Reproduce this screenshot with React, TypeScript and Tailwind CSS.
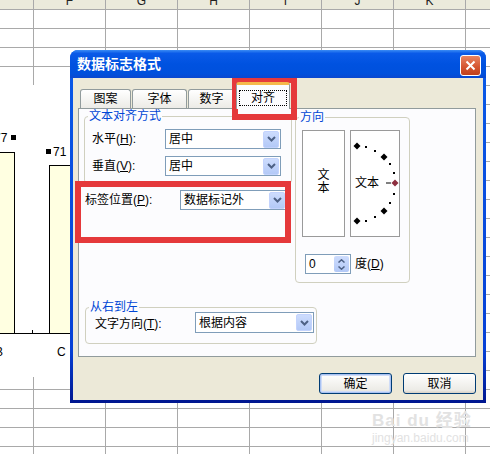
import React from "react";

const COLS = ["F", "G", "H", "I", "J", "K", "L"];

function SheetGrid() {
    return (
        <div className="flex flex-col">
            <div className="flex h-[10px] border-b border-[#a9a9a9] bg-[#ebeadb] overflow-hidden">
                <div className="w-[34px] shrink-0 border-r border-[#a9a9a9]" />
                {COLS.map((c) => (
                    <div
                        key={c}
                        className="w-[72px] shrink-0 border-r border-[#a9a9a9] flex items-end justify-center text-[12px] leading-none text-[#222] pb-[2px]"
                    >
                        {c}
                    </div>
                ))}
            </div>
            {Array.from({ length: 24 }).map((_, r) => (
                <div key={r} className="flex h-[19px] border-b border-[#a9a9a9]">
                    <div className="w-[34px] shrink-0 border-r border-[#a9a9a9]" />
                    {COLS.map((c) => (
                        <div key={c} className="w-[72px] shrink-0 border-r border-[#a9a9a9]" />
                    ))}
                </div>
            ))}
        </div>
    );
}

function Chart() {
    return (
        <div className="absolute left-0 top-[85px] w-[300px] h-[292px] bg-white text-[12px] text-black">
            <div className="absolute left-[-40px] top-[67px] w-[55px] h-[182px] border border-black bg-[#ffffe1]" />
            <div className="absolute left-[49px] top-[80px] w-[60px] h-[169px] border border-black bg-[#ffffe1]" />
            <div className="absolute left-0 top-[248px] w-[300px] h-px bg-black" />
            <div className="absolute left-[32px] top-[245px] w-px h-[3px] bg-black" />
            <span className="absolute left-[-6px] top-[46px] leading-[14px]">77</span>
            <div className="absolute left-[11px] top-[50px] w-[5px] h-[5px] bg-black" />
            <div className="absolute left-[46px] top-[64px] w-[5px] h-[5px] bg-black" />
            <span className="absolute left-[53px] top-[60px] leading-[14px]">71</span>
            <span className="absolute left-[-5px] top-[260px] leading-[14px]">B</span>
            <span className="absolute left-[57px] top-[260px] leading-[14px]">C</span>
        </div>
    );
}

function DropButton() {
    return (
        <div className="w-[16px] h-[17px] rounded-[2px] border border-[#c3d3fd] bg-[linear-gradient(to_bottom,#cddcfd,#b3c9f7)] flex items-center justify-center">
            <svg width="9" height="6" viewBox="0 0 9 6">
                <path d="M1 1 L4.5 4.5 L8 1" fill="none" stroke="#4d6185" strokeWidth="2" />
            </svg>
        </div>
    );
}

function Combo({ value, className }: { value: string; className: string }) {
    return (
        <div
            className={`${className} border border-[#7f9db9] bg-white flex items-center justify-between pl-[3px] pr-px`}
        >
            <span className="leading-[14px]">{value}</span>
            <DropButton />
        </div>
    );
}

function Group({
    title,
    className,
    children,
}: {
    title: string;
    className: string;
    children: React.ReactNode;
}) {
    return (
        <div className={`${className} relative border border-[#d0d0bf] rounded-[4px]`}>
            <span className="absolute left-[3px] top-[-8px] px-px bg-[#fcfcfe] leading-[14px] text-[#0046d5]">
                {title}
            </span>
            {children}
        </div>
    );
}

function Acc({ k }: { k: string }) {
    return (
        <span>
            (<span className="underline">{k}</span>):
        </span>
    );
}

function Orientation() {
    const small: [number, number][] = [
        [15, 16],
        [24, 20],
        [39, 33],
        [43, 42],
        [43, 63],
        [39, 72],
        [24, 86],
        [15, 90],
    ];
    const big: [number, number][] = [
        [6, 15],
        [33, 26],
        [33, 80],
        [6, 90],
    ];
    return (
        <div className="relative w-[50px] h-[107px] border border-[#9a9a9a] bg-white">
            <svg className="absolute left-0 top-0" width="48" height="105" viewBox="0 0 48 105">
                {small.map(([x, y], i) => (
                    <rect key={i} x={x - 1} y={y - 1} width="2" height="2" fill="#000" />
                ))}
                {big.map(([x, y], i) => (
                    <path key={i} d={`M${x} ${y - 3.5} L${x + 3.5} ${y} L${x} ${y + 3.5} L${x - 3.5} ${y} Z`} fill="#000" />
                ))}
                <line x1="35" y1="52" x2="40" y2="52" stroke="#000" strokeWidth="1" />
                <path d="M44 48.5 L47.5 52 L44 55.5 L40.5 52 Z" fill="#8e2f3f" />
            </svg>
            <span className="absolute left-[4px] top-[45px] leading-[14px]">文本</span>
        </div>
    );
}

function Spin() {
    return (
        <div className="w-[46px] h-[20px] border border-[#7f9db9] bg-white flex items-center justify-between pl-[3px] pr-px">
            <span className="leading-[14px]">0</span>
            <div className="w-[15px] h-[16px] rounded-[2px] bg-[linear-gradient(to_bottom,#cddcfd,#b3c9f7)] flex flex-col items-center justify-center gap-[3px]">
                <svg width="7" height="4" viewBox="0 0 7 4">
                    <path d="M0.5 3.5 L3.5 0.8 L6.5 3.5" fill="none" stroke="#4d6185" strokeWidth="1.5" />
                </svg>
                <svg width="7" height="4" viewBox="0 0 7 4">
                    <path d="M0.5 0.5 L3.5 3.2 L6.5 0.5" fill="none" stroke="#4d6185" strokeWidth="1.5" />
                </svg>
            </div>
        </div>
    );
}

function Dialog() {
    return (
        <div className="absolute left-[70px] top-[50px] w-[416px] h-[353px] rounded-t-[8px] bg-[linear-gradient(to_bottom,#0a5ae8,#0640d6_85%,#00168f)] flex flex-col px-[3px] pb-[3px]">
            <div className="h-[28px] -mx-[3px] rounded-t-[8px] bg-[linear-gradient(to_bottom,#3b8cf4_0%,#0a5ae8_12%,#0052e0_50%,#0050dc_85%,#0a47cf_100%)] flex items-start justify-between pl-[7px] pr-[5px]">
                <span className="mt-[5px] text-[14px] leading-[18px] font-bold text-white">数据标志格式</span>
                <div className="mt-[5px] w-[21px] h-[21px] rounded-[3px] border border-white bg-[linear-gradient(to_bottom,#e98462,#d4532e_60%,#c0401c)] flex items-center justify-center">
                    <svg width="11" height="11" viewBox="0 0 11 11">
                        <path d="M1.5 1.5 L9.5 9.5 M9.5 1.5 L1.5 9.5" stroke="#fff" strokeWidth="2" />
                    </svg>
                </div>
            </div>
            <div className="flex-1 bg-[#ece9d8] flex flex-col">
                <div className="mt-[4px] h-[26px] pl-[7px] flex items-end gap-px">
                    <div className="w-[51px] h-[19px] rounded-t-[3px] border border-b-0 border-[#919b9c] bg-[linear-gradient(to_bottom,#ffffff,#ecebe6)] flex items-center justify-center">图案</div>
                    <div className="w-[55px] h-[19px] rounded-t-[3px] border border-b-0 border-[#919b9c] bg-[linear-gradient(to_bottom,#ffffff,#ecebe6)] flex items-center justify-center">字体</div>
                    <div className="w-[47px] h-[19px] rounded-t-[3px] border border-b-0 border-[#919b9c] bg-[linear-gradient(to_bottom,#ffffff,#ecebe6)] flex items-center justify-center">数字</div>
                    <div className="relative z-10 w-[54px] h-[27px] mb-[-1px] rounded-t-[3px] border-x border-[#919b9c] border-t-[3px] border-t-[#f5b84a] bg-[#fcfcfe] flex items-start justify-center pt-[5px]">
                        <span className="w-[48px] h-[16px] border border-dotted border-black flex items-center justify-center leading-[14px]">对齐</span>
                    </div>
                </div>
                <div className="ml-[5px] w-[398px] h-[249px] border border-[#919b9c] bg-[#fcfcfe] flex flex-col">
                    <div className="flex">
                        <div className="w-[213px] flex flex-col">
                            <Group title="文本对齐方式" className="ml-[5px] mt-[7px] w-[208px] h-[68px] pt-[12px] flex flex-col gap-[7px]">
                                <div className="flex items-center pl-[7px]">
                                    <span className="w-[73px]">水平<Acc k="H" /></span>
                                    <Combo value="居中" className="w-[116px] h-[20px]" />
                                </div>
                                <div className="flex items-center pl-[7px]">
                                    <span className="w-[73px]">垂直<Acc k="V" /></span>
                                    <Combo value="居中" className="w-[116px] h-[20px]" />
                                </div>
                            </Group>
                            <div className="mt-[6px] pl-[6px] flex items-center">
                                <span className="w-[95px]">标签位置<Acc k="P" /></span>
                                <Combo value="数据标记外" className="w-[107px] h-[20px]" />
                            </div>
                        </div>
                        <Group title="方向" className="ml-[3px] mt-[8px] w-[115px] h-[166px] pt-[12px] pl-[6px] flex flex-col">
                            <div className="flex gap-[5px]">
                                <div className="w-[43px] h-[107px] border border-[#9a9a9a] bg-white flex flex-col items-center justify-center leading-[13px] pb-[3px]">
                                    <span>文</span>
                                    <span>本</span>
                                </div>
                                <Orientation />
                            </div>
                            <div className="mt-[17px] pl-[3px] flex items-center gap-[4px]">
                                <Spin />
                                <span>度(<span className="underline">D</span>)</span>
                            </div>
                        </Group>
                    </div>
                    <Group title="从右到左" className="ml-[6px] mt-[24px] w-[232px] h-[37px] pt-[4px] pl-[9px] flex items-start">
                        <span className="w-[100px] mt-[3px]">文字方向<Acc k="T" /></span>
                        <Combo value="根据内容" className="w-[119px] h-[21px]" />
                    </Group>
                </div>
                <div className="mt-[16px] pr-[7px] flex justify-end gap-[11px]">
                    <button className="w-[73px] h-[21px] rounded-[3px] border border-[#003c74] bg-[linear-gradient(to_bottom,#ffffff,#ecebe6_85%,#d6d0c5)] shadow-[inset_0_0_0_1px_#a9c2f2,inset_0_0_0_2px_#cfdcf7] leading-[14px]">确定</button>
                    <button className="w-[73px] h-[21px] rounded-[3px] border border-[#003c74] bg-[linear-gradient(to_bottom,#ffffff,#ecebe6_85%,#d6d0c5)] leading-[14px]">取消</button>
                </div>
            </div>
        </div>
    );
}

export default function App() {
    return (
        <div className="relative w-[490px] h-[454px] overflow-hidden bg-white font-['Liberation_Sans','Noto_Sans_CJK_SC',sans-serif] text-[12px] text-black">
            <SheetGrid />
            <Chart />
            <Dialog />
            {/* red highlight boxes drawn on top of the screenshot */}
            <div className="absolute left-[232px] top-[78px] w-[65px] h-[42px] border-[6px] border-t-[5px] border-[#e5393b]" />
            <div className="absolute left-[75px] top-[181px] w-[216px] h-[62px] border-[6px] border-[#e5393b]" />
            <div className="absolute left-[372px] top-[412px] flex flex-col items-start text-[#e2e2e2] leading-none">
                <span className="text-[17px] font-bold tracking-[1px]">Bai du 经验</span>
                <span className="mt-[3px] text-[12px]">jingyan.baidu.com</span>
            </div>
        </div>
    );
}
